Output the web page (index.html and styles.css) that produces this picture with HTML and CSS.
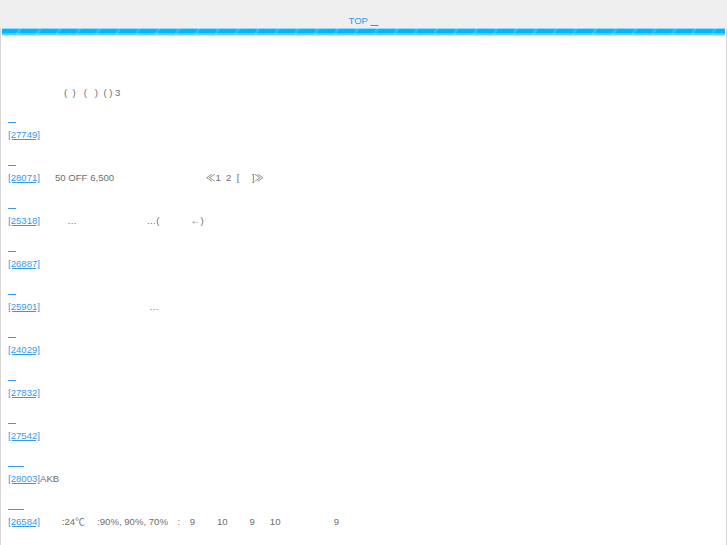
FILE: index.html
```html
<!DOCTYPE html>
<html lang="ja">
<head>
    <meta charset="UTF-8">
    <meta name="viewport" content="width=device-width, initial-scale=1.0">
    <title>TOP</title>
    <link rel="stylesheet" href="styles.css">
</head>
<body>
<div class="site-header">
    <span class="top-label">TOP</span> <a href="#" class="crumb">&nbsp;&nbsp;&nbsp;</a>
</div>
<div class="page">
    <div class="bar"></div>
    <div class="content">
        <p class="intro">　　　　　   (  )   (   )  ( ) 3</p>

        <div class="item">
            <a href="#" class="item-title">&nbsp;&nbsp;&nbsp;</a>
            <p class="item-line"><a href="#">[27749]</a></p>
        </div>
        <div class="item">
            <a href="#" class="item-title">&nbsp;&nbsp;&nbsp;</a>
            <p class="item-line"><a href="#">[28071]</a>　  50 OFF 6,500　　　　　　　　　  ≪1  2  [　 ]≫</p>
        </div>
        <div class="item">
            <a href="#" class="item-title">&nbsp;&nbsp;&nbsp;</a>
            <p class="item-line"><a href="#">[25318]</a>　　   …　　　　　　　 …(　　　 ←)</p>
        </div>
        <div class="item">
            <a href="#" class="item-title">&nbsp;&nbsp;&nbsp;</a>
            <p class="item-line"><a href="#">[26887]</a></p>
        </div>
        <div class="item">
            <a href="#" class="item-title">&nbsp;&nbsp;&nbsp;</a>
            <p class="item-line"><a href="#">[25901]</a>　　　　　　　　　　     …</p>
        </div>
        <div class="item">
            <a href="#" class="item-title">&nbsp;&nbsp;&nbsp;</a>
            <p class="item-line"><a href="#">[24029]</a></p>
        </div>
        <div class="item">
            <a href="#" class="item-title">&nbsp;&nbsp;&nbsp;</a>
            <p class="item-line"><a href="#">[27832]</a></p>
        </div>
        <div class="item">
            <a href="#" class="item-title">&nbsp;&nbsp;&nbsp;</a>
            <p class="item-line"><a href="#">[27542]</a></p>
        </div>
        <div class="item">
            <a href="#" class="item-title">&nbsp;&nbsp;&nbsp;&nbsp;&nbsp;&nbsp;</a>
            <p class="item-line"><a href="#">[28003]</a>AKB</p>
        </div>
        <div class="item">
            <a href="#" class="item-title">&nbsp;&nbsp;&nbsp;&nbsp;&nbsp;&nbsp;</a>
            <p class="item-line"><a href="#">[26584]</a>　　 :24℃　 :90%, 90%, 70%　:　9　　 10　　 9　  10　　　　　  9</p>
        </div>
    </div>
</div>
</body>
</html>
```

FILE: styles.css
```css
body {
    margin: 0;
    background-color: #efefef;
    color: #6e6e6e;
    font-family: "Liberation Sans", "Noto Sans CJK JP", sans-serif;
    font-size: 9.6px;
    line-height: 15px;
}
a {
    color: #3399f0;
}
.site-header {
    text-align: center;
    padding-top: 13px;
    height: 15px;
}
.top-label {
    color: #3399f0;
}
.page {
    background-color: #fff;
    border-left: 1px solid #d6d6d6;
    border-right: 1px solid #d6d6d6;
    min-height: 520px;
}
.bar {
    height: 8px;
    margin: 0 1px;
    background-image:
        repeating-linear-gradient(115deg, transparent 0 15px, rgba(255,255,255,0.14) 15px 18px),
        linear-gradient(to bottom, #8adcff 0 1px, #00b7ff 1px 5px, #55cdff 5px 7px, #bdeeff 7px 8px);
}
.content {
    padding: 49px 7px 0 7px;
}
.intro {
    margin: 0 0 12px 0;
    white-space: pre;
}
.item {
    margin-bottom: 13px;
}
.item-title {
    display: inline-block;
    white-space: pre;
    text-underline-offset: -1px;
}
.item-line {
    margin: 0;
    white-space: pre;
}
```
